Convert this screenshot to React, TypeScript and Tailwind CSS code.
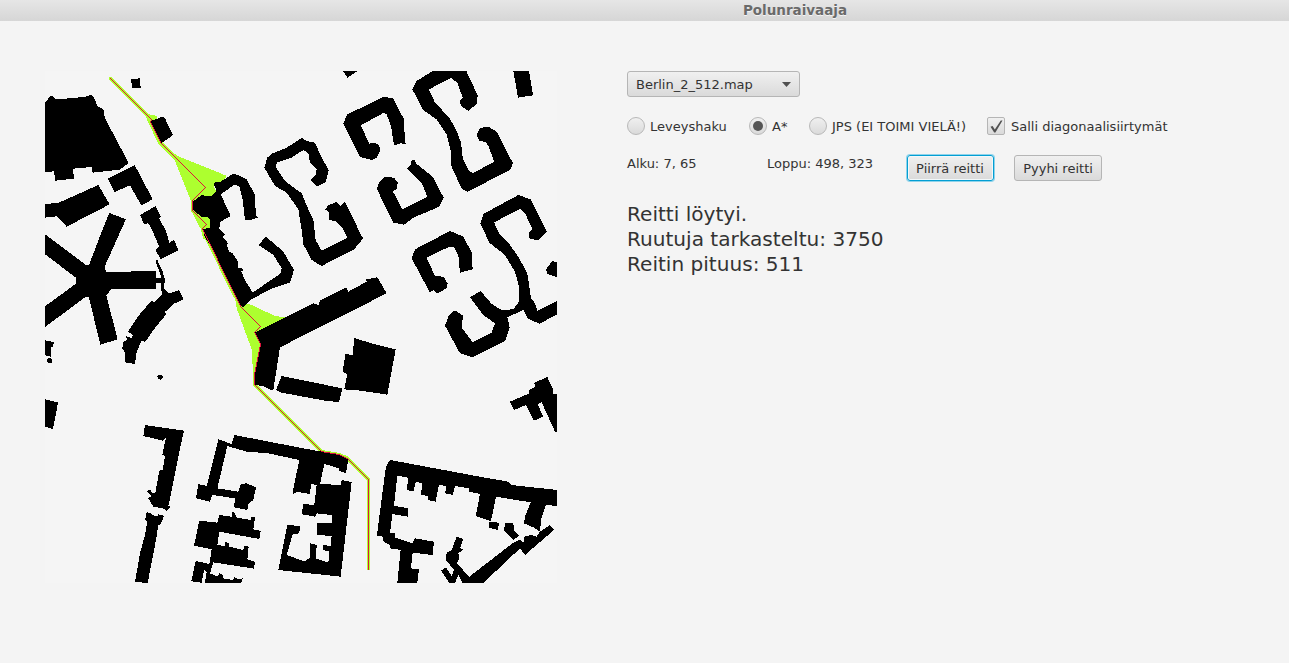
import React, { useState } from "react";

/* Every group is drawn on a grid of three units per map cell. */
type Tile = { at: [number, number]; shapes: string[] };

const buildings: Tile[] = [
  {
    at: [40, 66],
    shapes: [
      "15,108 22,103 28,92 36,90 48,100 100,96 144,91 148,88 157,88 168,108 172,121 180,124 192,133 194,155 266,291 240,311 158,320 155,303 100,308 101,338 46,344 42,316 15,318",
      "273,40 299,37 302,65 277,66",
      "331,165 352,158 364,152 374,155 398,206 392,213 366,230 360,229",
      "204,338 284,297 338,400 304,418 270,358 224,378",
      "15,414 40,412 52,412 175,357 209,415 80,482 50,451 15,455",
    ],
  },
  {
    at: [40, 230],
    shapes: [
      "208,-51 258,-32 243,0 194,110 198,126 273,126 273,123 348,123 348,143 362,143 362,135 346,92 352,90 368,125 375,150 371,175 380,185 390,190 417,181 431,208 400,222 376,245 377,255 340,300 320,330 315,335 305,332 290,365 285,402 255,397 256,370 247,355 250,335 262,330 258,318 275,325 278,315 264,305 280,280 305,245 335,213 342,216 368,192 362,178 363,158 348,158 348,177 213,178 199,197 233,328 181,344 147,203 138,200 15,291 15,229 108,161 108,143 15,73 15,13 138,105 147,105 187,0",
      "300,-45 347,-72 363,-40 358,-34 378,3 388,38 402,30 416,61 362,87 346,60 358,50 336,0 325,-20 312,-18",
      "15,331 42,336 38,350 33,350 32,380 15,376",
      "25,383 32,384 36,390 35,398 23,398 20,390",
      "357,434 363,434 369,441 362,449 356,447 351,440",
      "15,508 54,517 46,562 39,597 15,590",
    ],
  },
  {
    at: [210, 66],
    shapes: [
      "-50,405 -25,388 5,390 20,375 10,350 30,348 72,322 110,340 134,385 138,450 143,455 120,463 105,463 98,400 88,360 72,357 32,385 62,450 30,468 28,490 45,507 38,512 54,532 50,536 58,558 68,562 85,588 84,605 98,608 99,615 94,616 102,637 128,680 212,622 215,607 190,567 145,537 168,512 220,557 252,612 240,650 180,670 125,700 100,724 90,717 65,670 0,537 -15,515 -22,490 0,485 0,460 -10,452 -25,453 -50,433",
      "172,275 185,263 230,245 275,216 290,225 315,230 335,275 356,312 347,348 320,362 302,342 318,325 320,310 300,290 295,262 280,252 245,275 200,290 198,305 225,345 275,382 295,430 310,460 317,522 335,554 412,515 400,490 375,465 358,462 358,440 345,430 355,418 380,408 390,420 405,408 455,510 460,517 432,550 335,600 305,582 280,535 275,492 265,430 230,380 195,360 163,305",
      "399,15 443,15 412,35",
    ],
  },
  {
    at: [380, 66],
    shapes: [
      "-110,172 -98,145 -35,115 10,92 40,98 72,160 75,230 80,235 62,232 42,238 33,180 20,145 12,140 -58,178 -32,233 -18,230 -2,238 0,255 -10,275 -25,282 -60,273",
      "-10,368 0,345 15,333 42,335 53,350 50,370 38,375 67,430 142,392 125,350 80,308 95,295 92,285 102,280 108,292 158,332 191,395 178,422 100,455 72,476 40,470",
      "158,15 259,15 293,88 290,115 265,134 245,122 238,105 248,95 232,50 213,36 147,70 165,110 208,155 230,195 243,230 248,275 265,312 278,322 343,287 325,240 318,228 298,225 289,207 300,186 325,182 350,197 399,292 390,312 263,377 245,368 214,300 212,255 200,205 170,160 130,133 97,70 110,45",
      "400,15 447,15 459,88 414,95",
    ],
  },
  {
    at: [400, 190],
    shapes: [
      "250,72 355,15 392,28 440,125 415,152 388,145 386,130 398,118 375,70 360,57 282,97 297,130 330,165 355,200 382,250 393,325 405,340 412,362 471,333 471,374 418,401 385,387 370,360 322,382 329,412 316,452 268,476 217,502 180,490 135,407 147,375 165,361 190,378 185,400 187,415 218,457 275,428 285,400 250,375 210,322 242,303 275,342 305,360 340,358 357,335 357,290 345,245 315,195 268,158 241,100",
      "35,205 45,178 150,123 190,140 215,187 218,238 180,248 175,195 162,172 148,170 80,203 105,258 130,260 143,280 140,295 112,310 100,300 90,308",
      "438,238 458,212 471,218 471,262 442,252",
      "330,635 388,610 385,602 405,590 403,578 442,561 460,600 458,612 471,612 471,725 465,725 425,637 413,643 430,680 402,692 378,645 342,660",
    ],
  },
  {
    at: [210, 230],
    shapes: [
      "135,308 310,220 325,225 332,210 408,172 415,185 470,155 468,148 502,142 530,190 210,352 190,480 186,482 160,468 133,465 133,435 152,345",
      "215,438 397,475 387,516 350,513 210,487 198,480",
      "433,324 485,340 557,358 532,494 452,482 403,478 412,432 398,425 406,373 428,374",
    ],
  },
  {
    at: [130, 420],
    shapes: [
      "45,15 162,32 148,95 118,245 115,258 122,260 110,272 98,265 70,260 55,235 64,228 50,215 60,208 66,218 76,219 88,152 98,150 105,108 97,105 108,52 98,62 40,48",
      "50,277 63,279 66,286 84,288 85,283 102,287 92,313 85,315 78,360 53,489 15,486 30,400 45,345 52,305 45,300",
      "265,58 305,72 313,45 520,85 575,95 625,103 655,117 648,160 628,152 628,145 583,132 570,192 632,195 635,180 665,186 632,470 445,450 460,375 472,315 510,318 508,340 488,342 470,405 525,425 540,412 540,370 560,375 558,415 595,428 598,395 580,390 580,375 602,378 605,348 562,345 562,310 605,310 605,285 560,280 555,290 517,283 518,252 553,255 560,195 543,192 540,222 500,215 488,225 490,205 508,120 415,100 350,95 292,78 262,205 325,215 333,192 350,190 378,202 370,240 356,250 352,270 312,262 315,235 247,225 240,245 198,235 205,192 230,198",
      "208,302 262,308 268,285 305,290 305,276 315,278 318,292 362,300 364,290 375,291 370,328 392,333 388,357 268,335 262,375 285,378 285,367 297,368 297,380 340,390 342,378 356,380 352,418 375,425 372,446 250,427 240,460 262,470 268,460 277,462 280,475 310,480 312,470 325,478 338,475 334,489 225,489 230,455 222,450 215,488 184,484 197,423 238,432 245,388 192,377",
    ],
  },
  {
    at: [340, 440],
    shapes: [
      "138,80 150,60 430,112 505,125 515,135 651,150 651,198 618,195 603,240 600,275 580,262 552,250 555,230 572,187 468,170 453,243 407,228 420,162 388,155 387,145 345,138 338,165 316,160 318,138 297,135 287,185 264,180 264,168 243,165 247,130 228,125 220,155 200,150 205,113 172,107 162,197 204,205 203,230 157,222 150,280 165,280 165,292 218,310 225,295 282,305 278,345 218,338 213,385 237,388 232,429 172,429 182,330 150,325 150,315 128,303 128,290 111,287 125,175",
      "448,245 477,248 474,270 447,263",
      "495,250 520,250 522,270 537,288 520,300 492,272",
      "630,255 642,270 555,345 540,325 430,429 368,429 355,405 345,429 328,429 303,392 318,382 335,408 342,390 318,360 320,338 335,330 350,290 370,297 360,325 370,328 355,340 358,355 350,370 388,410 520,308 540,298 550,308 553,290 575,285 590,290 600,275",
    ],
  },
];

const explored: Tile[] = [
  {
    at: [40, 66],
    shapes: [
      "316,142 350,150 352,158 331,168 362,226 412,270 540,321 560,330 545,350 520,360 528,375 515,392 485,390 460,406 460,433 485,452 508,453 510,465 510,485 495,490 505,520 490,520 483,490 453,433 453,405 404,282 356,234 322,165",
    ],
  },
  {
    at: [210, 230],
    shapes: [
      "90,225 118,222 195,258 230,262 150,302 138,308 155,345 136,466 130,465 126,360 100,290 80,235 76,210 60,180 -18,20 -10,20 70,180",
    ],
  },
];

type Cell = [number, number];

const waypoints: Cell[] = [
  [110, 78], [151, 119], [150, 122], [160, 142], [205, 187], [192, 200], [192, 210],
  [206, 224], [202, 228], [231, 288], [240, 306], [260, 326], [254, 332], [260, 344],
  [254, 374], [254, 384], [321, 451], [338, 454], [347, 458], [368, 479], [368, 569],
];

function walk(points: Cell[]): Cell[] {
  const cells: Cell[] = [];
  for (let i = 1; i < points.length; i++) {
    const [ax, ay] = points[i - 1];
    const [bx, by] = points[i];
    const steps = Math.max(Math.abs(bx - ax), Math.abs(by - ay));
    for (let s = 0; s <= steps; s++) {
      cells.push([Math.round(ax + ((bx - ax) * s) / steps), Math.round(ay + ((by - ay) * s) / steps)]);
    }
  }
  return cells;
}

const route = walk(waypoints);
const routePath = route.map(([x, y]) => `M${x} ${y}h1v1h-1z`).join("");
const haloPath = route.slice(0, -1).map(([x, y]) => `M${x - 1} ${y - 1}h3v3h-3z`).join("");
const eavesPath = walk([[321, 451], [338, 454], [347, 457]]).map(([x, y]) => `M${x} ${y - 1}h1v1h-1z`).join("");

const Shapes = ({ tiles }: { tiles: Tile[] }) => (
  <>
    {tiles.map(({ at, shapes }) => (
      <g key={at.join()} transform={`translate(${at[0]} ${at[1]}) scale(0.333333)`}>
        {shapes.map((points) => (
          <polygon key={points} points={points} />
        ))}
      </g>
    ))}
  </>
);

function RouteMap() {
  return (
    <svg viewBox="45 71 512 512" className="h-[512px] w-[512px] shrink-0 bg-[#f5f5f5]" shapeRendering="crispEdges">
      <g fill="#adff2f">
        <Shapes tiles={explored} />
        <path d={haloPath} />
      </g>
      <g fill="#000">
        <Shapes tiles={buildings} />
      </g>
      <path d={eavesPath} fill="#adff2f" />
      <path d={routePath} fill="#dc143c" />
    </svg>
  );
}

const face = "bg-linear-to-b from-[#f0f0f0] to-[#dadada]";

function Radio({ label, checked, onSelect }: { label: string; checked: boolean; onSelect: () => void }) {
  return (
    <button type="button" role="radio" aria-checked={checked} onClick={onSelect} className="flex items-center gap-[5px] whitespace-nowrap">
      <span className={`flex size-[18px] items-center justify-center rounded-full border border-[#b8b8b8] ${face}`}>
        {checked && <span className="size-[10px] rounded-full bg-[#555]" />}
      </span>
      <span className="pt-[2px]">{label}</span>
    </button>
  );
}

export default function App() {
  const [method, setMethod] = useState("A*");
  const [diagonal, setDiagonal] = useState(true);
  return (
    <div className="h-[663px] w-[1289px] overflow-hidden bg-[#f4f4f4] font-['DejaVu_Sans',sans-serif] text-[13px] leading-[16px] text-[#333]">
      <header className="flex h-[21px] items-center justify-center bg-linear-to-b from-[#e6e6e6] to-[#d6d6d6] pb-[2px] pl-[301px] text-[13.5px] font-bold text-[#6a6a6a] [text-shadow:0_1px_0_#f4f4f4]">
        Polunraivaaja
      </header>
      <main className="flex gap-[70px] pt-[50px] pl-[45px]">
        <RouteMap />
        <section className="flex flex-col items-start">
          <button type="button" className={`flex h-[26px] w-[173px] items-center justify-between rounded-[3px] border border-[#b5b5b5] pr-[8px] pl-[8px] ${face}`}>
            <span className="pt-[2px]">Berlin_2_512.map</span>
            <svg viewBox="0 0 9 5" className="h-[5px] w-[9px] fill-[#505050]">
              <path d="M0 0H9L4.5 5Z" />
            </svg>
          </button>
          <div className="mt-[20px] flex items-center">
            <div className="w-[122px]">
              <Radio label="Leveyshaku" checked={method === "L"} onSelect={() => setMethod("L")} />
            </div>
            <div className="w-[60px]">
              <Radio label="A*" checked={method === "A*"} onSelect={() => setMethod("A*")} />
            </div>
            <div className="w-[178px]">
              <Radio label="JPS (EI TOIMI VIELÄ!)" checked={method === "JPS"} onSelect={() => setMethod("JPS")} />
            </div>
            <button type="button" role="checkbox" aria-checked={diagonal} onClick={() => setDiagonal(!diagonal)} className="flex items-center gap-[6px] whitespace-nowrap">
              <span className={`flex size-[18px] items-center justify-center rounded-[2px] border border-[#b5b5b5] ${face}`}>
                {diagonal && (
                  <svg viewBox="0 0 13 13" className="size-[13px] fill-[#505050]">
                    <path d="M.5 6.7 2.6 5.9 4.8 9.4 10.8.5 12.5.5 5.4 12.5 4.2 12.5Z" />
                  </svg>
                )}
              </span>
              <span className="pt-[2px]">Salli diagonaalisiirtymät</span>
            </button>
          </div>
          <div className="mt-[20px] flex items-start">
            <span className="w-[140px] pt-px">Alku: 7, 65</span>
            <span className="w-[140px] pt-px">Loppu: 498, 323</span>
            <button type="button" className={`h-[26px] w-[87px] rounded-[3px] border border-[#039ed3] pt-[2px] pr-px whitespace-nowrap shadow-[0_0_0_1px_#8fd3ea,inset_0_0_0_1px_#f2f8fa] ${face}`}>
              Piirrä reitti
            </button>
            <button type="button" className={`ml-[20px] h-[26px] w-[88px] rounded-[3px] border border-[#b5b5b5] pt-[2px] whitespace-nowrap ${face}`}>
              Pyyhi reitti
            </button>
          </div>
          <div className="mt-[21px] text-[20.08px] leading-[25px]">
            <p>Reitti löytyi.</p>
            <p>Ruutuja tarkasteltu: 3750</p>
            <p>Reitin pituus: 511</p>
          </div>
        </section>
      </main>
    </div>
  );
}
